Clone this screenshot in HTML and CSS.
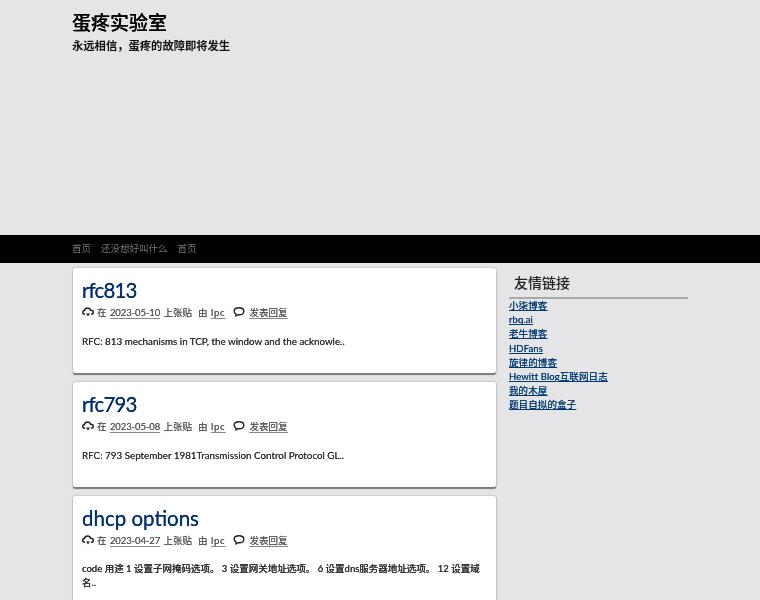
FILE: index.html
```html
<!DOCTYPE html>
<html lang="zh">
<head>
<meta charset="utf-8">
<title>蛋疼实验室</title>
<link rel="stylesheet" href="styles.css">
</head>
<body>
<header class="site-header">
  <div class="wrap">
    <h1 class="site-title">蛋疼实验室</h1>
    <p class="site-desc">永远相信，蛋疼的故障即将发生</p>
  </div>
</header>
<nav class="nav">
  <div class="wrap nav-row">
    <a href="#">首页</a>
    <a href="#">还没想好叫什么</a>
    <a href="#">首页</a>
  </div>
</nav>
<div class="wrap content">
  <main class="posts">
    <article class="card">
      <h2 class="post-title tight"><a href="#">rfc813</a></h2>
      <div class="meta">
        <svg class="icon" viewBox="0 0 12 12"><path d="M3 8.200H2.600C1.400 8.200.7 7.300.7 6.300c0-1 .8-1.800 1.800-1.800C2.800 3 4.100 2 5.600 2c1.400 0 2.600.9 3 2.300 1.400 0 2.700.8 2.700 2.100 0 1-.9 1.800-2 1.800H9" fill="none" stroke="#222" stroke-width="1.500"/><path d="M4 7.500h4L6 10.500z" fill="#222"/></svg>
        <span>在 <a href="#" class="date">2023-05-10</a> 上张贴</span>
        <span class="m-by">由 <a href="#" class="author">lpc</a></span>
        <svg class="icon icon-c" viewBox="0 0 12 12"><path d="M6 1.800c2.800 0 4.800 1.500 4.800 3.500 0 2.100-2 3.500-4.300 3.500-.4 0-.9 0-1.300-.1L3 9.800l.1-1.700C1.900 7.500 1.200 6.500 1.200 5.300 1.200 3.300 3.200 1.800 6 1.800z" fill="none" stroke="#222" stroke-width="1.400"/></svg>
        <a href="#">发表回复</a>
      </div>
      <p class="excerpt">RFC: 813 mechanisms in TCP, the window and the acknowle..</p>
    </article>
    <article class="card">
      <h2 class="post-title tight"><a href="#">rfc793</a></h2>
      <div class="meta">
        <svg class="icon" viewBox="0 0 12 12"><path d="M3 8.200H2.600C1.400 8.200.7 7.300.7 6.300c0-1 .8-1.800 1.800-1.800C2.800 3 4.100 2 5.600 2c1.400 0 2.600.9 3 2.300 1.400 0 2.700.8 2.700 2.100 0 1-.9 1.800-2 1.800H9" fill="none" stroke="#222" stroke-width="1.500"/><path d="M4 7.500h4L6 10.500z" fill="#222"/></svg>
        <span>在 <a href="#" class="date">2023-05-08</a> 上张贴</span>
        <span class="m-by">由 <a href="#" class="author">lpc</a></span>
        <svg class="icon icon-c" viewBox="0 0 12 12"><path d="M6 1.800c2.800 0 4.800 1.500 4.800 3.500 0 2.100-2 3.500-4.300 3.500-.4 0-.9 0-1.300-.1L3 9.800l.1-1.700C1.900 7.500 1.200 6.500 1.200 5.300 1.200 3.300 3.200 1.800 6 1.800z" fill="none" stroke="#222" stroke-width="1.400"/></svg>
        <a href="#">发表回复</a>
      </div>
      <p class="excerpt">RFC: 793 September 1981Transmission Control Protocol GL..</p>
    </article>
    <article class="card">
      <h2 class="post-title"><a href="#">dhcp options</a></h2>
      <div class="meta">
        <svg class="icon" viewBox="0 0 12 12"><path d="M3 8.200H2.600C1.400 8.200.7 7.300.7 6.300c0-1 .8-1.800 1.800-1.800C2.800 3 4.100 2 5.600 2c1.400 0 2.600.9 3 2.300 1.400 0 2.700.8 2.700 2.100 0 1-.9 1.800-2 1.800H9" fill="none" stroke="#222" stroke-width="1.500"/><path d="M4 7.500h4L6 10.500z" fill="#222"/></svg>
        <span>在 <a href="#" class="date">2023-04-27</a> 上张贴</span>
        <span class="m-by">由 <a href="#" class="author">lpc</a></span>
        <svg class="icon icon-c" viewBox="0 0 12 12"><path d="M6 1.800c2.800 0 4.800 1.500 4.800 3.500 0 2.100-2 3.500-4.300 3.500-.4 0-.9 0-1.300-.1L3 9.800l.1-1.700C1.900 7.500 1.200 6.500 1.200 5.300 1.200 3.300 3.200 1.800 6 1.800z" fill="none" stroke="#222" stroke-width="1.400"/></svg>
        <a href="#">发表回复</a>
      </div>
      <p class="excerpt excerpt-cjk">code 用途 1 设置子网掩码选项。 3 设置网关地址选项。 6 设置dns服务器地址选项。 12 设置域名..</p>
    </article>
  </main>
  <aside class="side">
    <h3 class="side-title">友情链接</h3>
    <ul class="links">
      <li><a href="#">小柒博客</a></li>
      <li><a href="#">rbq.ai</a></li>
      <li><a href="#">老牛博客</a></li>
      <li><a href="#">HDFans</a></li>
      <li><a href="#">旋律的博客</a></li>
      <li><a href="#">Hewitt Blog互联网日志</a></li>
      <li><a href="#">我的木屋</a></li>
      <li><a href="#">题目自拟的盒子</a></li>
    </ul>
  </aside>
</div>
</body>
</html>
```
FILE: styles.css
```css
* { box-sizing: border-box; }
html, body { margin: 0; height: 600px; overflow: hidden; }
body {
  background: #e5e5e7;
  color: #222;
  font-family: Lato, "Noto Sans CJK SC", sans-serif;
  font-size: 9.500px;
  filter: blur(0.35px);
}
a { color: inherit; }
.wrap { width: 616px; margin: 0 auto; }
.site-header { height: 235px; padding-top: 11px; }
.site-title {
  margin: 0;
  font-size: 19px;
  font-weight: 500;
  line-height: 24px;
  color: #000;
  text-shadow: 0 0 .4px #000;
}
.site-desc {
  margin: 4px 0 0;
  font-size: 11.300px;
  font-weight: 700;
  line-height: 14px;
  color: #111;
}
.nav { height: 28px; background: #000; }
.nav-row { display: flex; gap: 10px; align-items: center; height: 26px; }
.nav-row a { color: #777; text-decoration: none; font-size: 9.500px; }
.content { display: flex; padding-top: 5px; }
.posts { width: 423px; margin-left: 1px; flex: none; }
.card {
  height: 105px;
  margin-bottom: 9px;
  padding: 8px 9px 0;
  background: #fff;
  border-radius: 2px;
  box-shadow: 0 0 2px #888, 0 2px 1px #777;
}
.card:last-child { height: 160px; }
.post-title {
  margin: 0;
  font-size: 20.500px;
  font-weight: 400;
  line-height: 29px;
  text-shadow: 0 0 .5px #003070;
}
.tight { letter-spacing: -.9px; }
.post-title a { color: #003070; text-decoration: none; }
.meta {
  display: flex;
  align-items: center;
  height: 14px;
  color: #555;
  font-size: 9.500px;
  white-space: pre-wrap;
  word-spacing: 1px;
  text-shadow: 0 0 .3px #666;
}
.meta a { color: #555; text-decoration: underline; text-decoration-color: #888; text-underline-offset: 2px; }
.icon { width: 12px; height: 12px; flex: none; margin-right: 3px; }
.date { letter-spacing: -.1px; }
.author { letter-spacing: .8px; }
.m-by { margin-left: 6px; }
.icon-c { margin: 0 4px 0 8px; }
.excerpt {
  margin: 15px 0 0;
  font-size: 9.800px;
  line-height: 14px;
  color: #333;
  text-shadow: 0 0 .3px #333;
}
.excerpt-cjk {
  font-size: 9.500px;
  font-weight: 500;
}
.side { width: 179px; margin-left: 13px; flex: none; }
.side-title {
  margin: 0;
  height: 31px;
  padding: 5px 0 0 5px;
  font-size: 14px;
  font-weight: 500;
  line-height: 20px;
  color: #222;
  border-bottom: 2px solid #aaa;
}
.links { margin: 0; padding: 0; list-style: none; }
.links li { height: 14.200px; font-size: 9.500px; line-height: 14.200px; letter-spacing: .1px; }
.links a { color: #003a75; text-shadow: 0 0 .4px #003a75; }
```
